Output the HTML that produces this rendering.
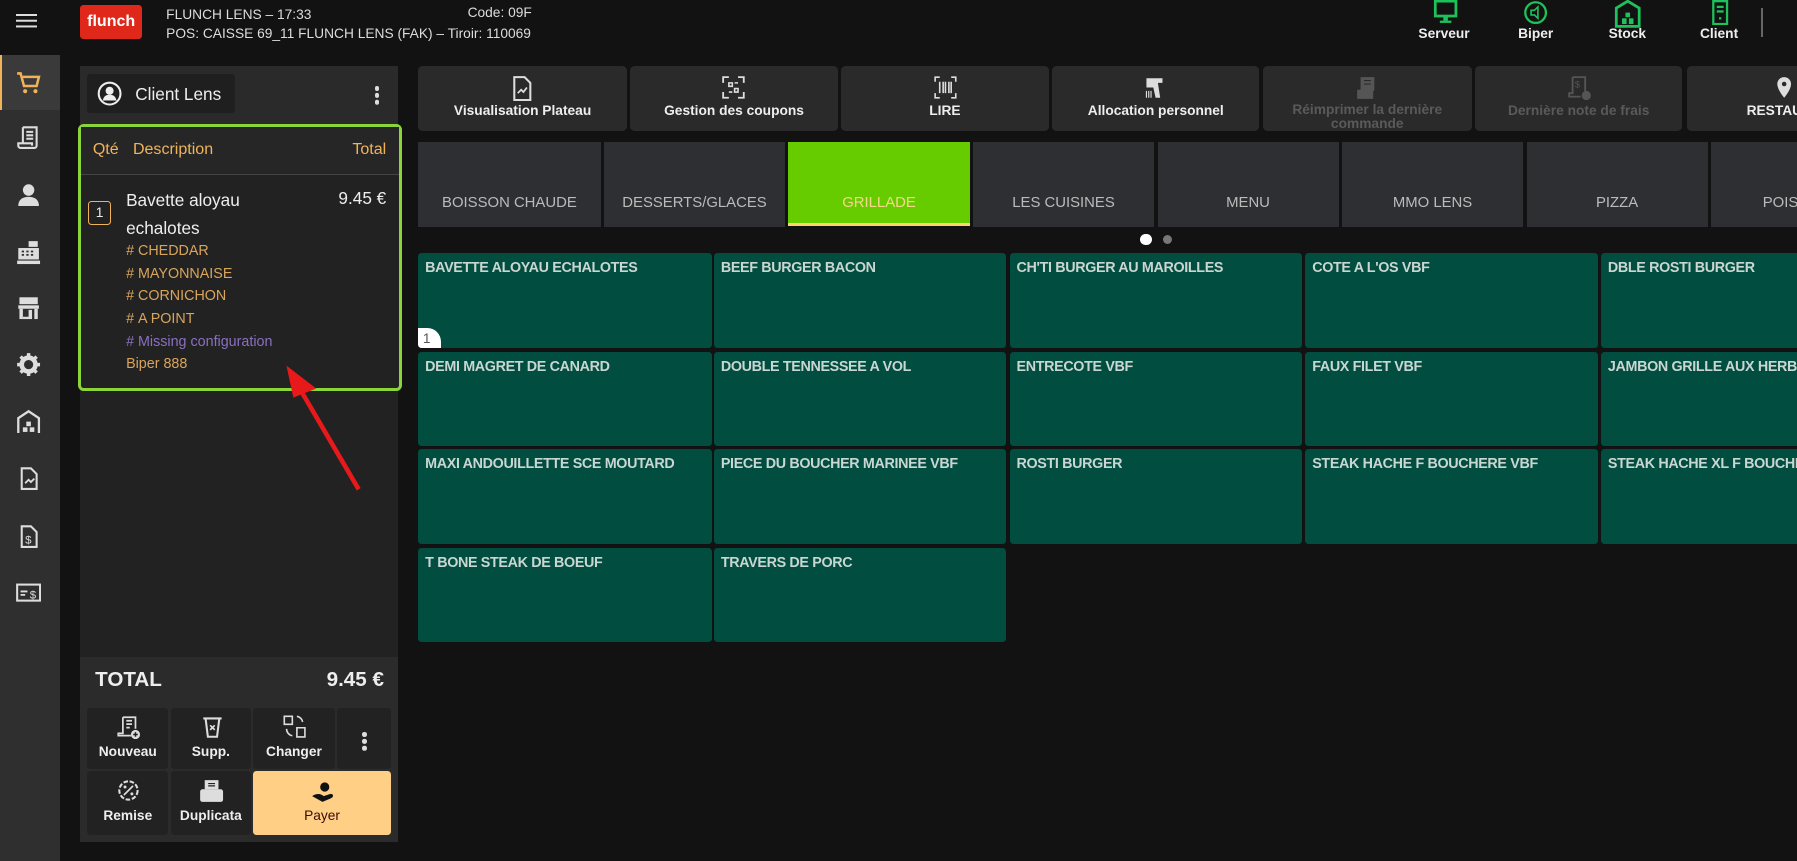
<!DOCTYPE html>
<html><head><meta charset="utf-8"><style>
html,body{margin:0;padding:0;background:#121212;overflow:hidden}
#r{position:relative;width:1568px;height:751px;zoom:1.14605;background:#121212;font-family:"Liberation Sans",sans-serif;color:#eee;overflow:hidden}
.a{position:absolute}
.btn{position:absolute;background:#2a2a2a;border-radius:4px;text-align:center;font-size:12px;font-weight:bold;color:#eee}
.tab{position:absolute;top:124px;height:74px;background:#2e2f33;color:#bbb;font-size:13px;text-align:center;line-height:108px;overflow:hidden;white-space:nowrap}
.t{position:absolute;background:#014d40;border-radius:3px;color:#c9d6d1;font-size:12.5px;font-weight:bold;letter-spacing:-0.3px;padding:6px 6px;box-sizing:border-box;white-space:nowrap;overflow:hidden}
.sb{position:absolute;left:14px;width:22px;height:22px}
.ob{position:absolute;background:#222;border-radius:3px;color:#eee;font-size:12px;font-weight:bold;text-align:center}
.mod{position:absolute;left:110px;font-size:12.5px;color:#d9a55a}
</style></head><body><div id="r">
<div class="a" style="left:14px;top:12px;width:18px;height:2px;background:#ddd;box-shadow:0 5px 0 #ddd,0 10px 0 #ddd"></div>
<div class="a" style="left:70px;top:4px;width:54px;height:30px;background:#e0281a;border-radius:3px;color:#fff;font-weight:bold;font-size:14px;text-align:center;line-height:28px">flunch</div>
<div class="a" style="left:145px;top:4px;font-size:12px;color:#ddd;line-height:17px">FLUNCH LENS – 17:33<br>POS: CAISSE 69_11 FLUNCH LENS (FAK) – Tiroir: 110069</div>
<div class="a" style="left:408px;top:4px;font-size:12px;color:#ddd">Code: 09F</div>
<svg class="a" style="left:1250px;top:0" width="22" height="22" viewBox="0 0 22 22"><rect x="2" y="1" width="18" height="13" fill="none" stroke="#1ec25a" stroke-width="2.4"/><rect x="9" y="14" width="4" height="4" fill="#1ec25a"/><rect x="6" y="18" width="10" height="2" fill="#1ec25a"/></svg>
<svg class="a" style="left:1329px;top:0" width="22" height="22" viewBox="0 0 22 22"><circle cx="11" cy="11" r="9" fill="none" stroke="#1ec25a" stroke-width="2"/><path d="M7 9h3l3-3v10l-3-3H7z" fill="none" stroke="#1ec25a" stroke-width="1.4"/></svg>
<svg class="a" style="left:1408px;top:0" width="24" height="24" viewBox="0 0 24 24"><path d="M2 23V7l10-6 10 6v16z" fill="none" stroke="#1ec25a" stroke-width="2.4"/><rect x="10" y="11" width="4" height="4" fill="#1ec25a"/><rect x="7" y="16" width="4" height="5" fill="#1ec25a"/><rect x="13" y="16" width="4" height="5" fill="#1ec25a"/></svg>
<svg class="a" style="left:1493px;top:0" width="16" height="22" viewBox="0 0 16 22"><rect x="2" y="1" width="12" height="20" fill="none" stroke="#1ec25a" stroke-width="2"/><rect x="5" y="5" width="6" height="2" fill="#1ec25a"/><rect x="5" y="9" width="6" height="2" fill="#1ec25a"/><rect x="7" y="15" width="2" height="2" fill="#1ec25a"/></svg>
<div class="a" style="left:1230px;top:23px;width:60px;text-align:center;font-size:12px;font-weight:bold">Serveur</div>
<div class="a" style="left:1310px;top:23px;width:60px;text-align:center;font-size:12px;font-weight:bold">Biper</div>
<div class="a" style="left:1390px;top:23px;width:60px;text-align:center;font-size:12px;font-weight:bold">Stock</div>
<div class="a" style="left:1470px;top:23px;width:60px;text-align:center;font-size:12px;font-weight:bold">Client</div>
<div class="a" style="left:1537px;top:7px;width:1px;height:25px;background:#666"></div>
<div class="a" style="left:0;top:48px;width:52px;height:703px;background:#2f2f2f"></div>
<div class="a" style="left:0;top:48px;width:52px;height:48px;background:#3a3a3a;border-left:2px solid #f0b35a;box-sizing:border-box"></div>
<svg class="sb" style="top:61px" viewBox="0 0 22 22"><path d="M1 3h3l3 11h11l2-8H6" fill="none" stroke="#f0b35a" stroke-width="2.2"/><circle cx="8" cy="18.5" r="1.8" fill="#f0b35a"/><circle cx="17" cy="18.5" r="1.8" fill="#f0b35a"/></svg>
<svg class="sb" style="top:109px" viewBox="0 0 22 22"><path d="M6 2h12v16a2 2 0 0 1-2 2H4a2 2 0 0 1-2-2v-2h12v2M6 2v14M9 6h6M9 9h6M9 12h6" fill="none" stroke="#ddd" stroke-width="1.8"/></svg>
<svg class="sb" style="top:159px" viewBox="0 0 22 22"><circle cx="11" cy="7" r="5" fill="#ddd"/><path d="M2 21c0-6 4-8 9-8s9 2 9 8z" fill="#ddd"/></svg>
<svg class="sb" style="top:209px" viewBox="0 0 22 22"><rect x="11" y="1" width="8" height="5" fill="#ddd"/><rect x="2" y="7" width="18" height="10" fill="#ddd"/><rect x="1" y="18" width="20" height="3" fill="#ddd"/><path d="M5 10h2M9 10h2M13 10h2M5 13h2M9 13h2M13 13h2" stroke="#2f2f2f" stroke-width="1.5"/></svg>
<svg class="sb" style="top:257px" viewBox="0 0 22 22"><rect x="3" y="2" width="16" height="6" fill="#ddd"/><rect x="2" y="9" width="18" height="3" fill="#ddd"/><rect x="3" y="12" width="3" height="9" fill="#ddd"/><rect x="16" y="12" width="3" height="9" fill="#ddd"/><rect x="6" y="19" width="8" height="2" fill="#ddd"/><rect x="11" y="13" width="3" height="7" fill="#ddd"/></svg>
<svg class="sb" style="top:307px" viewBox="0 0 22 22"><circle cx="11" cy="11" r="6" fill="none" stroke="#ddd" stroke-width="4"/><path d="M11 1v4M11 17v4M1 11h4M17 11h4M4 4l3 3M15 15l3 3M4 18l3-3M15 7l3-3" stroke="#ddd" stroke-width="3"/></svg>
<svg class="sb" style="top:357px" viewBox="0 0 22 22"><path d="M2 21V8l9-6 9 6v13" fill="none" stroke="#ddd" stroke-width="2"/><rect x="9" y="11" width="4" height="4" fill="#ddd"/><rect x="6" y="16" width="4" height="4" fill="#ddd"/><rect x="12" y="16" width="4" height="4" fill="#ddd"/></svg>
<svg class="sb" style="top:407px" viewBox="0 0 22 22"><path d="M5 2h8l5 5v13H5z" fill="none" stroke="#ddd" stroke-width="1.8"/><path d="M8 15l3-3 2 2 3-3" fill="none" stroke="#ddd" stroke-width="1.6"/></svg>
<svg class="sb" style="top:457px" viewBox="0 0 22 22"><path d="M5 2h8l5 5v13H5z" fill="none" stroke="#ddd" stroke-width="1.8"/><text x="8" y="17" font-size="10" fill="#ddd" font-family="Liberation Sans">$</text></svg>
<svg class="sb" style="top:506px" viewBox="0 0 22 22"><rect x="1" y="4" width="20" height="14" fill="none" stroke="#ddd" stroke-width="1.8"/><path d="M4 10h6M4 13h4" stroke="#ddd" stroke-width="1.6"/><text x="12" y="16" font-size="10" fill="#ddd" font-family="Liberation Sans">$</text></svg>
<div class="a" style="left:70px;top:58px;width:277px;height:677px;background:#222"></div>
<div class="a" style="left:70px;top:58px;width:277px;height:50px;background:#2a2a2a"></div>
<div class="a" style="left:76px;top:65px;width:129px;height:34px;background:#1f1f1f;border-radius:3px"></div>
<svg class="a" style="left:85px;top:71px" width="22" height="22" viewBox="0 0 22 22"><circle cx="11" cy="11" r="9.5" fill="none" stroke="#eee" stroke-width="1.8"/><circle cx="11" cy="8.5" r="3.5" fill="#eee"/><path d="M5 17c1-4 3-5 6-5s5 1 6 5z" fill="#eee"/></svg>
<div class="a" style="left:118px;top:73px;font-size:15px">Client Lens</div>
<div class="a" style="left:327px;top:75px;width:4px;height:4px;border-radius:2px;background:#ddd;box-shadow:0 6px 0 #ddd,0 12px 0 #ddd"></div>
<div class="a" style="left:68px;top:108px;width:283px;height:233px;border:3px solid #8bd43a;border-radius:5px;box-sizing:border-box;background:#222"></div>
<div class="a" style="left:71px;top:111px;width:277px;height:41px;background:#262626;border-bottom:1px solid #444"></div>
<div class="a" style="left:81px;top:122px;font-size:14px;color:#f0b35a">Qté</div>
<div class="a" style="left:116px;top:122px;font-size:14px;color:#f0b35a">Description</div>
<div class="a" style="right:1231px;top:122px;font-size:14px;color:#f0b35a">Total</div>
<div class="a" style="left:77px;top:175px;width:18px;height:20px;border:1px solid #f0b35a;border-radius:3px;font-size:12px;text-align:center;line-height:20px">1</div>
<div class="a" style="left:110px;top:162px;font-size:15px;line-height:25px">Bavette aloyau<br>echalotes</div>
<div class="a" style="right:1231px;top:165px;font-size:15px;line-height:17px">9.45 €</div>
<div class="mod" style="top:212px">#&nbsp;CHEDDAR</div>
<div class="mod" style="top:232px">#&nbsp;MAYONNAISE</div>
<div class="mod" style="top:251px">#&nbsp;CORNICHON</div>
<div class="mod" style="top:271px">#&nbsp;A POINT</div>
<div class="mod" style="top:291px;color:#8a6fc0">#&nbsp;Missing configuration</div>
<div class="mod" style="top:311px">Biper 888</div>
<svg class="a" style="left:240px;top:315px" width="80" height="115" viewBox="0 0 80 115"><path d="M73 112L18 18" stroke="#e8191a" stroke-width="4"/><path d="M10 4l26 20-20 8z" fill="#e8191a"/></svg>
<div class="a" style="left:70px;top:573px;width:277px;height:162px;background:#2b2b2b"></div>
<div class="a" style="left:83px;top:583px;font-size:18px;font-weight:bold">TOTAL</div>
<div class="a" style="right:1233px;top:583px;font-size:18px;font-weight:bold">9.45 €</div>
<div class="ob" style="left:76px;top:618px;width:71px;height:53px"><div style="margin-top:31px">Nouveau</div></div>
<div class="ob" style="left:149px;top:618px;width:70px;height:53px"><div style="margin-top:31px">Supp.</div></div>
<div class="ob" style="left:221px;top:618px;width:71px;height:53px"><div style="margin-top:31px">Changer</div></div>
<div class="ob" style="left:294px;top:618px;width:47px;height:53px"></div>
<div class="a" style="left:316px;top:639px;width:4px;height:4px;border-radius:2px;background:#ddd;box-shadow:0 6px 0 #ddd,0 12px 0 #ddd"></div>
<div class="ob" style="left:76px;top:673px;width:71px;height:56px"><div style="margin-top:32px">Remise</div></div>
<div class="ob" style="left:149px;top:673px;width:70px;height:56px"><div style="margin-top:32px">Duplicata</div></div>
<div class="ob" style="left:221px;top:673px;width:120px;height:56px;background:#ffcf85;color:#3a0b0b;font-weight:normal"><div style="margin-top:32px">Payer</div></div>
<svg class="a" style="left:101px;top:624px" width="22" height="22" viewBox="0 0 22 22"><path d="M6 2h11v10M6 2v14H2v2h11M9 5h5M9 8h5M9 11h3" fill="none" stroke="#ddd" stroke-width="1.5"/><circle cx="17" cy="17" r="4" fill="#ddd"/><path d="M17 15v4M15 17h4" stroke="#222" stroke-width="1.3"/></svg>
<svg class="a" style="left:175px;top:624px" width="20" height="22" viewBox="0 0 20 22"><path d="M2 3h16M4 3l2 16h8l2-16" fill="none" stroke="#ddd" stroke-width="1.8"/><path d="M8 9l4 4M12 9l-4 4" stroke="#ddd" stroke-width="1.5"/></svg>
<svg class="a" style="left:246px;top:623px" width="24" height="22" viewBox="0 0 24 22"><path d="M2 2h7v7H2zM13 12h7v8h-7z" fill="none" stroke="#ddd" stroke-width="1.4"/><path d="M13 2a6 6 0 0 1 5 5M4 13a6 6 0 0 0 5 6" fill="none" stroke="#ddd" stroke-width="1.4"/></svg>
<svg class="a" style="left:102px;top:680px" width="20" height="20" viewBox="0 0 20 20"><circle cx="10" cy="10" r="8" fill="none" stroke="#ddd" stroke-width="1.8" stroke-dasharray="4 1.5"/><path d="M6 14l8-8" stroke="#ddd" stroke-width="1.5"/><circle cx="7" cy="7" r="1.3" fill="#ddd"/><circle cx="13" cy="13" r="1.3" fill="#ddd"/></svg>
<svg class="a" style="left:174px;top:680px" width="22" height="22" viewBox="0 0 22 22"><rect x="5" y="1" width="12" height="8" fill="#ddd"/><rect x="1" y="9" width="20" height="11" rx="2" fill="#ddd"/><path d="M8 4h6M8 6h6" stroke="#222" stroke-width="1"/></svg>
<svg class="a" style="left:271px;top:680px" width="22" height="22" viewBox="0 0 22 22"><circle cx="12" cy="7" r="4" fill="#111"/><path d="M1 15c4-3 8-2 10 0l6-2c3 0 3 3 0 4l-7 3z" fill="#111"/></svg>
<div class="btn" style="left:365px;top:58px;width:182px;height:56px"><div style="margin-top:32px">Visualisation Plateau</div></div>
<div class="btn" style="left:550px;top:58px;width:181px;height:56px"><div style="margin-top:32px">Gestion des coupons</div></div>
<div class="btn" style="left:734px;top:58px;width:181px;height:56px"><div style="margin-top:32px">LIRE</div></div>
<div class="btn" style="left:918px;top:58px;width:181px;height:56px"><div style="margin-top:32px">Allocation personnel</div></div>
<div class="btn" style="left:1102px;top:58px;width:182px;height:56px;color:#5a5a5a"><div style="margin-top:32px;line-height:12px">Réimprimer la dernière<br>commande</div></div>
<div class="btn" style="left:1287px;top:58px;width:181px;height:56px;color:#5a5a5a"><div style="margin-top:32px">Dernière note de frais</div></div>
<div class="btn" style="left:1472px;top:58px;width:120px;height:56px;text-align:left"><div style="margin-top:32px;margin-left:52px">RESTAU</div></div>
<svg class="a" style="left:447px;top:66px" width="18" height="22" viewBox="0 0 18 22"><path d="M2 1h9l5 5v15H2z" fill="none" stroke="#ddd" stroke-width="1.8"/><path d="M5 15l3-3 2 2 3-4" fill="none" stroke="#ddd" stroke-width="1.5"/></svg>
<svg class="a" style="left:630px;top:66px" width="20" height="20" viewBox="0 0 20 20"><path d="M1 6V1h5M14 1h5v5M19 14v5h-5M6 19H1v-5" fill="none" stroke="#ddd" stroke-width="1.6"/><path d="M6 6h3v3H6zM11 11h3v3h-3zM11 6h3M6 14h3" stroke="#ddd" stroke-width="1.4" fill="none"/></svg>
<svg class="a" style="left:815px;top:66px" width="20" height="20" viewBox="0 0 20 20"><path d="M1 5V1h4M15 1h4v4M19 15v4h-4M5 19H1v-4M5 5v10M8 5v10M10 5v10M13 5v10M15 5v10" fill="none" stroke="#ddd" stroke-width="1.4"/></svg>
<svg class="a" style="left:997px;top:66px" width="22" height="22" viewBox="0 0 22 22"><path d="M3 2h14v4h-4l2 13h-4l-2-9H3z" fill="#ddd"/><path d="M3 13v6M5 13v6M7 13v6" stroke="#ddd"/></svg>
<svg class="a" style="left:1183px;top:66px" width="22" height="22" viewBox="0 0 22 22"><path d="M4 1h12v12H4zM1 12h14v8H1z" fill="#555"/><path d="M7 4h6M7 7h6" stroke="#2a2a2a"/></svg>
<svg class="a" style="left:1368px;top:66px" width="22" height="22" viewBox="0 0 22 22"><path d="M4 1h11v14M4 1v14H1v3h10" fill="none" stroke="#555" stroke-width="1.6"/><circle cx="16" cy="17" r="4" fill="#555"/><text x="6" y="10" font-size="8" fill="#555" font-family="Liberation Sans">$</text></svg>
<svg class="a" style="left:1549px;top:66px" width="16" height="22" viewBox="0 0 16 22"><path d="M8 1a6 6 0 0 1 6 6c0 5-6 12-6 12S2 12 2 7a6 6 0 0 1 6-6z" fill="#ddd"/><circle cx="8" cy="7" r="2" fill="#2a2a2a"/></svg>
<div class="tab" style="left:365px;width:159px">BOISSON CHAUDE</div>
<div class="tab" style="left:527px;width:158px">DESSERTS/GLACES</div>
<div class="tab" style="left:688px;width:158px;height:71px;background:#66cc00;color:#f5d98a;border-bottom:3px solid #ffd36b">GRILLADE</div>
<div class="tab" style="left:849px;width:158px">LES CUISINES</div>
<div class="tab" style="left:1010px;width:158px">MENU</div>
<div class="tab" style="left:1171px;width:158px">MMO LENS</div>
<div class="tab" style="left:1332px;width:158px">PIZZA</div>
<div class="tab" style="left:1493px;width:158px">POISSONS</div>
<div class="a" style="left:995px;top:204px;width:10px;height:10px;border-radius:5px;background:#fff"></div>
<div class="a" style="left:1015px;top:205px;width:8px;height:8px;border-radius:4px;background:#777"></div>
<div class="t" style="left:365px;top:221px;width:256px;height:83px">BAVETTE ALOYAU ECHALOTES</div>
<div class="a" style="left:365px;top:286px;width:20px;height:18px;background:#fff;border-radius:0 12px 0 3px;color:#555;font-size:12px;line-height:20px;padding-left:4px;box-sizing:border-box">1</div>
<div class="t" style="left:623px;top:221px;width:255px;height:83px">BEEF BURGER BACON</div>
<div class="t" style="left:881px;top:221px;width:255px;height:83px">CH'TI BURGER AU MAROILLES</div>
<div class="t" style="left:1139px;top:221px;width:255px;height:83px">COTE A L'OS VBF</div>
<div class="t" style="left:1397px;top:221px;width:255px;height:83px">DBLE ROSTI BURGER</div>
<div class="t" style="left:365px;top:307px;width:256px;height:82px">DEMI MAGRET DE CANARD</div>
<div class="t" style="left:623px;top:307px;width:255px;height:82px">DOUBLE TENNESSEE A VOL</div>
<div class="t" style="left:881px;top:307px;width:255px;height:82px">ENTRECOTE VBF</div>
<div class="t" style="left:1139px;top:307px;width:255px;height:82px">FAUX FILET VBF</div>
<div class="t" style="left:1397px;top:307px;width:255px;height:82px">JAMBON GRILLE AUX HERBES</div>
<div class="t" style="left:365px;top:392px;width:256px;height:83px">MAXI ANDOUILLETTE SCE MOUTARD</div>
<div class="t" style="left:623px;top:392px;width:255px;height:83px">PIECE DU BOUCHER MARINEE VBF</div>
<div class="t" style="left:881px;top:392px;width:255px;height:83px">ROSTI BURGER</div>
<div class="t" style="left:1139px;top:392px;width:255px;height:83px">STEAK HACHE F BOUCHERE VBF</div>
<div class="t" style="left:1397px;top:392px;width:255px;height:83px">STEAK HACHE XL F BOUCHERE</div>
<div class="t" style="left:365px;top:478px;width:256px;height:82px">T BONE STEAK DE BOEUF</div>
<div class="t" style="left:623px;top:478px;width:255px;height:82px">TRAVERS DE PORC</div>
</div></body></html>
